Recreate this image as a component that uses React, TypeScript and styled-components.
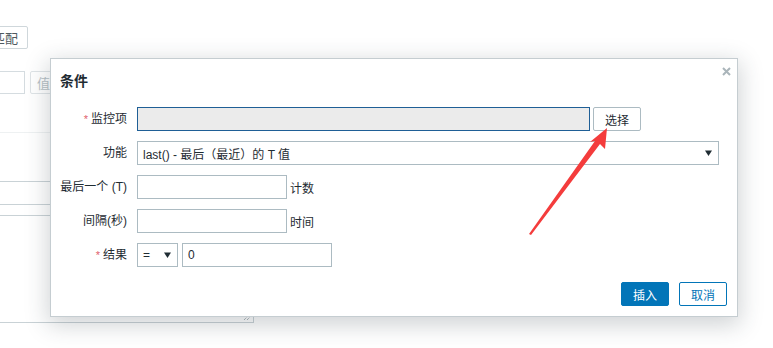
import React from "react";
import styled, { createGlobalStyle } from "styled-components";

const Global = createGlobalStyle`
  html, body { margin: 0; padding: 0; background: #ffffff; }
  body {
    font-family: "Liberation Sans", Arial, "Noto Sans CJK SC", sans-serif;
    font-size: 12px;
    color: #1f2c33;
    overflow: hidden;
  }
`;

const Page = styled.div`
  position: relative;
  width: 773px;
  height: 348px;
  overflow: hidden;
  display: flex;
  flex-direction: column;
  padding-top: 26px;
  box-sizing: border-box;
`;

const BgButton = styled.div<{ $muted?: boolean }>`
  height: 23px;
  box-sizing: border-box;
  border: 1px solid ${(p) => (p.$muted ? "#dfe4e7" : "#cfd7db")};
  border-radius: 2px;
  display: flex;
  align-items: center;
  padding: 0 6px;
  color: ${(p) => (p.$muted ? "#b8c2c7" : "#4f5a60")};
  font-size: 13px;
  background: #fff;
  white-space: nowrap;
  flex: none;
`;

const TopButton = styled(BgButton)`
  align-self: flex-start;
  margin-left: -20px;
  width: 48px;
  justify-content: flex-end;
  padding: 0 9px 0 0;
  overflow: hidden;
`;

const BgRow = styled.div`
  display: flex;
  gap: 5px;
  margin-top: 22px;
  margin-left: -20px;
`;

const BgInput = styled.div`
  width: 45px;
  height: 23px;
  box-sizing: border-box;
  border: 1px solid #d5dce0;
`;

const BgDivider = styled.div`
  margin-top: 38px;
  height: 1px;
  width: 260px;
  background: #eef1f2;
`;

const BgWideInput = styled.div`
  margin-top: 48px;
  margin-left: -20px;
  width: 300px;
  height: 24px;
  box-sizing: border-box;
  border-top: 1px solid #c9d2d6;
  border-bottom: 1px solid #c9d2d6;
`;

const BgTextarea = styled.div`
  position: relative;
  margin-top: 10px;
  margin-left: -20px;
  width: 274px;
  height: 108px;
  box-sizing: border-box;
  border: 1px solid #c9d2d6;
`;

const ResizeGrip = styled.svg`
  position: absolute;
  right: 1px;
  bottom: 1px;
`;

const Modal = styled.div`
  position: absolute;
  left: 50px;
  top: 58px;
  width: 688px;
  height: 259px;
  box-sizing: border-box;
  background: #fff;
  border: 1px solid #c5cdd1;
  box-shadow: 0 6px 22px 2px rgba(40, 55, 65, 0.22);
  display: flex;
  flex-direction: column;
  padding: 13px 10px 10px 9px;
`;

const Title = styled.h4`
  margin: 0;
  font-size: 14px;
  line-height: 18px;
  font-weight: bold;
  color: #1f2c33;
`;

const Close = styled.button`
  position: absolute;
  top: 5px;
  right: 4px;
  width: 14px;
  height: 14px;
  padding: 0;
  border: 0;
  background: transparent;
  display: flex;
  align-items: center;
  justify-content: center;
`;

const Form = styled.div`
  margin-top: 17px;
  display: grid;
  grid-template-columns: 67px 1fr;
  column-gap: 10px;
  row-gap: 10px;
  align-items: center;
`;

const Label = styled.label`
  text-align: right;
  font-size: 12px;
  line-height: 24px;
  white-space: nowrap;
  color: #1f2c33;
`;

const Req = styled.span`
  color: #e0606c;
  margin-right: 3px;
  font-size: 11px;
`;

const Field = styled.div<{ $gap?: number }>`
  display: flex;
  align-items: center;
  gap: ${(p) => p.$gap ?? 3}px;
  height: 24px;
`;

const Input = styled.div<{ $w: number; $readonly?: boolean }>`
  width: ${(p) => p.$w}px;
  height: 24px;
  box-sizing: border-box;
  border: 1px solid ${(p) => (p.$readonly ? "#1f5f96" : "#acbbc2")};
  background: ${(p) => (p.$readonly ? "#ebebeb" : "#fff")};
  display: flex;
  align-items: center;
  padding: 0 5px;
  font-size: 12px;
  color: #1f2c33;
`;

const Select = styled.div<{ $w: number }>`
  width: ${(p) => p.$w}px;
  height: 24px;
  box-sizing: border-box;
  border: 1px solid #acbbc2;
  background: #fff;
  display: flex;
  align-items: center;
  justify-content: space-between;
  padding: 0 6px 0 5px;
  font-size: 12px;
  color: #1f2c33;
  white-space: nowrap;
`;

const Caret = styled.svg`
  flex: none;
`;

const Suffix = styled.span`
  font-size: 12px;
  color: #1f2c33;
`;

const Button = styled.button<{ $variant?: "primary" | "outline" | "plain" }>`
  width: 48px;
  height: 24px;
  box-sizing: border-box;
  border-radius: 2px;
  font-family: inherit;
  font-size: 12px;
  padding: 0;
  cursor: pointer;
  border: 1px solid
    ${(p) =>
      p.$variant === "primary" ? "#0275b8" : p.$variant === "outline" ? "#0275b8" : "#acbbc2"};
  background: ${(p) => (p.$variant === "primary" ? "#0275b8" : "#fff")};
  color: ${(p) =>
    p.$variant === "primary" ? "#fff" : p.$variant === "outline" ? "#0275b8" : "#1f2c33"};
`;

const Footer = styled.div`
  margin-top: auto;
  display: flex;
  justify-content: flex-end;
  gap: 10px;
`;

const Arrow = styled.svg`
  position: absolute;
  left: 0;
  top: 0;
  pointer-events: none;
`;

const CaretIcon = () => (
  <Caret width="7" height="6" viewBox="0 0 7 6">
    <path d="M0 0.5 L7 0.5 L3.5 6 Z" fill="#1f2c33" />
  </Caret>
);

export default function App() {
  return (
    <>
      <Global />
      <Page>
        <TopButton>匹配</TopButton>
        <BgRow>
          <BgInput />
          <BgButton $muted>值</BgButton>
        </BgRow>
        <BgDivider />
        <BgWideInput />
        <BgTextarea>
          <ResizeGrip width="9" height="7" viewBox="0 0 9 7">
            <path d="M1 6 L6 1 M4 6 L9 1" stroke="#8a979d" strokeWidth="1" strokeDasharray="1 1" />
          </ResizeGrip>
        </BgTextarea>

        <Modal>
          <Title>条件</Title>
          <Close aria-label="close">
            <svg width="9" height="9" viewBox="0 0 9 9">
              <path d="M1 1 L8 8 M8 1 L1 8" stroke="#aab5ba" strokeWidth="2" />
            </svg>
          </Close>
          <Form>
            <Label>
              <Req>*</Req>监控项
            </Label>
            <Field>
              <Input $w={453} $readonly />
              <Button $variant="plain">选择</Button>
            </Field>

            <Label>功能</Label>
            <Field>
              <Select $w={582}>
                <span>last() - 最后（最近）的 T 值</span>
                <CaretIcon />
              </Select>
            </Field>

            <Label>最后一个 (T)</Label>
            <Field>
              <Input $w={150} />
              <Suffix>计数</Suffix>
            </Field>

            <Label>间隔(秒)</Label>
            <Field>
              <Input $w={150} />
              <Suffix>时间</Suffix>
            </Field>

            <Label>
              <Req>*</Req>结果
            </Label>
            <Field $gap={4}>
              <Select $w={41}>
                <span>=</span>
                <CaretIcon />
              </Select>
              <Input $w={150}>0</Input>
            </Field>
          </Form>
          <Footer>
            <Button $variant="primary">插入</Button>
            <Button $variant="outline">取消</Button>
          </Footer>
        </Modal>

        <Arrow width="773" height="348" viewBox="0 0 773 348">
          <polygon
            points="607,128 605,149 600,144 531,235 529,234 595,141 590,142"
            fill="#f43c3c"
          />
        </Arrow>
      </Page>
    </>
  );
}
